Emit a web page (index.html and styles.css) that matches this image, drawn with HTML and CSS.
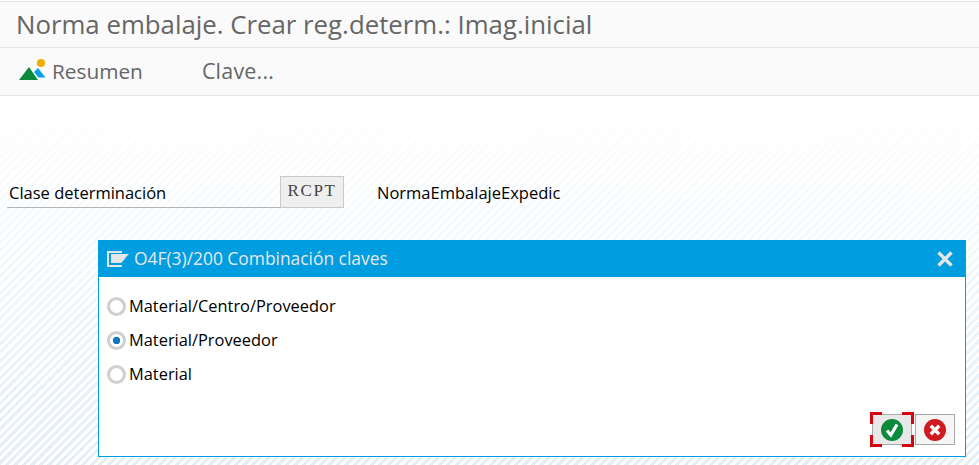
FILE: index.html
```html
<!DOCTYPE html>
<html lang="es">
  <head>
    <meta charset="UTF-8" />
    <title>Norma embalaje</title>
    <link rel="stylesheet" href="styles.css">
  </head>
  <body>
    <div class="title-bar">
      <h1>Norma embalaje. Crear reg.determ.: Imag.inicial</h1>
    </div>
    <div class="toolbar">
      <span class="tool">
        <svg class="tool-icon" width="28" height="26" viewBox="0 0 28 26">
          <circle cx="22" cy="6" r="4" fill="#f0ab00" />
          <path d="M19 11 L26.5 20.5 H19.5 L15 15 Z" fill="#0a9fe3" />
          <path d="M10 10 L19 23 H0 Z" fill="#0c8a3c" />
        </svg>
        Resumen
      </span>
      <span class="tool tool-plain">Clave...</span>
    </div>
    <div class="content">
      <div class="field-row">
        <label class="field-label">Clase determinación</label>
        <span class="field-value">RCPT</span>
        <span class="field-desc">NormaEmbalajeExpedic</span>
      </div>
    </div>

    <div class="dialog">
      <div class="dialog-head">
        <svg class="dialog-icon" width="22" height="16" viewBox="0 0 22 16">
          <path d="M0 0 H15 V2 H2 V14 H15 V16 H0 Z" fill="#e6e6e6" />
          <path d="M4 3 H22 L19 6 L17 9 L14 12 H4 Z" fill="#e6e6e6" />
        </svg>
        <span class="dialog-title">O4F(3)/200 Combinación claves</span>
        <svg class="dialog-close" width="16" height="16" viewBox="0 0 16 16">
          <path d="M1.5 1.5 L14.5 14.5 M14.5 1.5 L1.5 14.5" stroke="#e6e6e6" stroke-width="3.4" />
        </svg>
      </div>
      <div class="dialog-body">
        <div class="radio-row"><span class="radio"></span>Material/Centro/Proveedor</div>
        <div class="radio-row"><span class="radio radio-on"></span>Material/Proveedor</div>
        <div class="radio-row"><span class="radio"></span>Material</div>
      </div>
      <div class="dialog-foot">
        <button class="btn btn-focus">
          <i class="corner c1"></i><i class="corner c2"></i><i class="corner c3"></i><i class="corner c4"></i>
          <svg width="22" height="22" viewBox="0 0 22 22">
            <circle cx="11" cy="11" r="11" fill="#0c8a3c" />
            <path d="M6 11.5 L9.8 16 L16 5.5" fill="none" stroke="#fff" stroke-width="3.2" />
          </svg>
        </button>
        <button class="btn">
          <svg width="22" height="22" viewBox="0 0 22 22">
            <circle cx="11" cy="11" r="11" fill="#cf1a1f" />
            <path d="M6.8 6.8 L15.2 15.2 M15.2 6.8 L6.8 15.2" fill="none" stroke="#fff" stroke-width="3.4" />
          </svg>
        </button>
      </div>
    </div>
  </body>
</html>
```

FILE: styles.css
```css
html,
body {
  height: 100%;
}
body {
  margin: 0;
  overflow: hidden;
  font-family: "Open Sans", "Noto Sans", sans-serif;
  background-color: #fff;
  color: #000;
}
.title-bar {
  height: 45px;
  margin-top: 1px;
  border-top: 1px solid #e4e4e4;
  border-bottom: 1px solid #e4e4e4;
  background-color: #fafafa;
  padding-left: 16px;
  display: flex;
  align-items: center;
}
h1 {
  margin: 0 0 2px;
  font-size: 25.8px;
  font-weight: 400;
  color: #666;
  white-space: nowrap;
}
.toolbar {
  height: 47px;
  border-bottom: 1px solid #e4e4e4;
  background-color: #fafafa;
  padding-left: 19px;
  display: flex;
  align-items: center;
  gap: 59px;
  font-size: 20.8px;
  color: #666;
}
.tool {
  display: flex;
  align-items: center;
  gap: 5px;
  padding-bottom: 2px;
}
.tool-icon {
  margin-top: -1px;
}
.tool-plain {
  font-size: 21.5px;
  letter-spacing: 0.2px;
}
.content {
  height: 370px;
  padding-top: 80px;
  box-sizing: border-box;
  background-image: repeating-linear-gradient(135deg, rgba(215, 232, 243, 0.7) 0 3px, transparent 3px 6px);
  position: relative;
}
.content::before {
  content: "";
  position: absolute;
  inset: 0;
  background: linear-gradient(#fff 0, rgba(255, 255, 255, 0) 100%);
}
.field-row {
  position: relative;
  display: flex;
  align-items: stretch;
  margin-left: 7px;
  height: 32px;
  font-size: 16.5px;
}
.field-label {
  width: 273px;
  padding-left: 2px;
  box-sizing: border-box;
  border-bottom: 1px solid #b5b5b5;
  display: flex;
  align-items: center;
  padding-top: 1px;
}
.field-value {
  width: 64px;
  box-sizing: border-box;
  border: 1px solid #c9c9c9;
  background-color: #efefef;
  font-family: "Liberation Serif", serif;
  font-size: 17px;
  letter-spacing: 1.6px;
  color: #444;
  text-align: center;
  line-height: 28px;
}
.field-desc {
  margin-left: 33px;
  display: flex;
  align-items: center;
  padding-top: 1px;
}
.dialog {
  position: absolute;
  left: 98px;
  top: 240px;
  width: 868px;
  height: 217px;
  box-sizing: border-box;
  border: 1px solid #009de0;
  background-color: #fff;
}
.dialog-head {
  height: 36px;
  background-color: #009de0;
  display: flex;
  align-items: center;
  padding-left: 8px;
  color: #e8e8e8;
  font-size: 17.4px;
}
.dialog-icon {
  margin-right: 5px;
}
.dialog-title {
  flex: 1;
  padding-bottom: 3px;
}
.dialog-close {
  margin-right: 12px;
}
.dialog-body {
  padding-top: 12px;
  font-size: 16.4px;
}
.radio-row {
  height: 34px;
  box-sizing: border-box;
  padding: 0 0 2px 8px;
  display: flex;
  align-items: center;
  gap: 3px;
}
.radio {
  width: 19px;
  height: 19px;
  margin-top: 2px;
  box-sizing: border-box;
  border: 3px solid #cfcfcf;
  border-radius: 50%;
  background-color: #fff;
}
.radio-on {
  background: radial-gradient(circle, #0a78c4 0 3.4px, #fff 4px);
}
.dialog-foot {
  position: absolute;
  right: 10px;
  bottom: 11px;
  display: flex;
  gap: 3px;
}
.btn {
  position: relative;
  width: 40px;
  height: 31px;
  padding: 0;
  box-sizing: border-box;
  border: 1px solid #a8a8a8;
  background-color: #f5f5f5;
  display: flex;
  align-items: center;
  justify-content: center;
}
.btn-focus {
  background-color: #e8e8e8;
}
.corner {
  position: absolute;
  width: 9px;
  height: 9px;
  border: 0 solid #d40511;
}
.c1 { left: -3px; top: -3px; border-width: 3px 0 0 3px; }
.c2 { right: -3px; top: -3px; border-width: 3px 3px 0 0; }
.c3 { left: -3px; bottom: -3px; border-width: 0 0 3px 3px; }
.c4 { right: -3px; bottom: -3px; border-width: 0 3px 3px 0; }
```
